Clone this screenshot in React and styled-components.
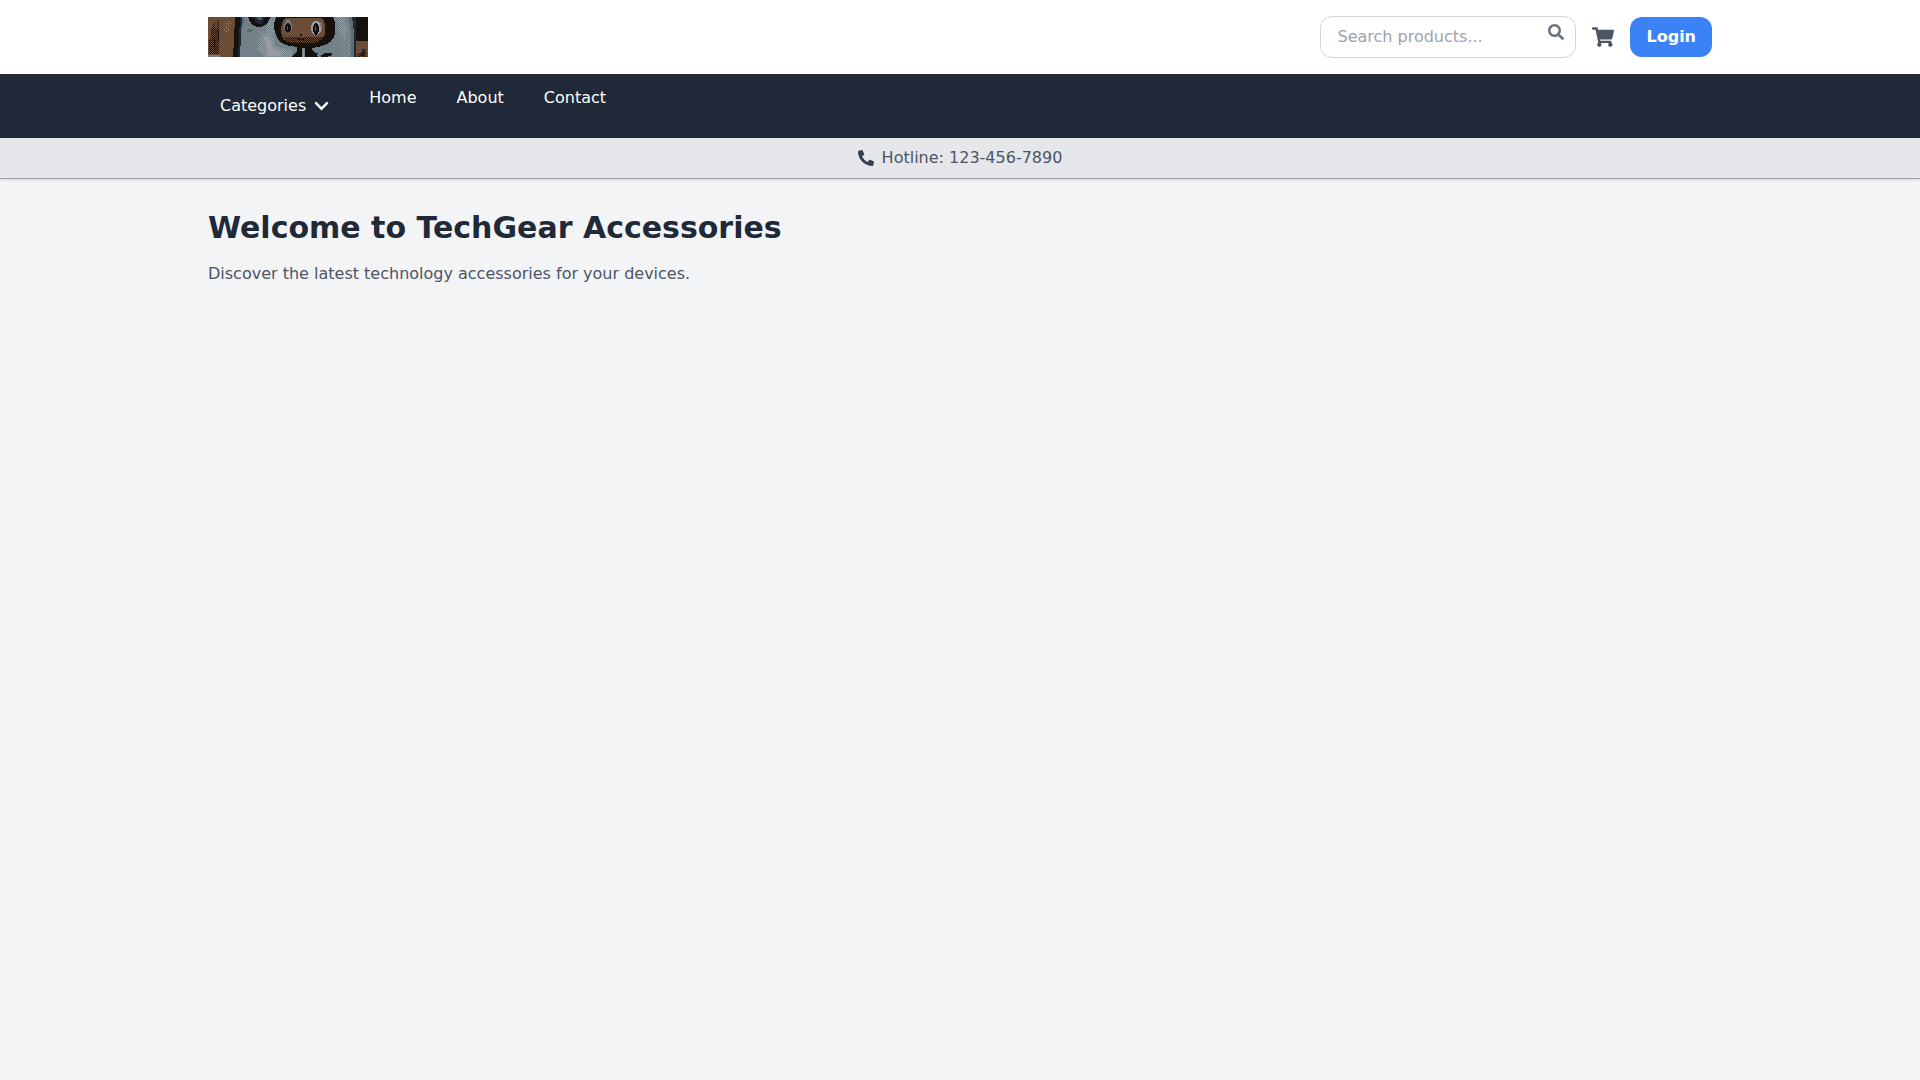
import React, { useState } from 'react';
import styled, { createGlobalStyle } from 'styled-components';
import { FaSearch, FaShoppingCart, FaChevronDown, FaPhoneAlt } from 'react-icons/fa';

const GlobalStyle = createGlobalStyle`
    *, *::before, *::after {
        box-sizing: border-box;
    }

    body {
        margin: 0;
        background-color: #f3f4f6;
        color: #1f2937;
        font-family: 'DejaVu Sans', sans-serif;
        font-size: 16px;
        line-height: 24px;
    }

    button, input {
        font: inherit;
    }
`;

const Container = styled.div`
    width: 100%;
    max-width: 1536px;
    margin: 0 auto;
    padding: 0 16px;
`;

const Header = styled.header`
    background-color: #ffffff;
    box-shadow: 0 1px 0 #9ca3af, 0 2px 2px rgba(0, 0, 0, 0.12);
`;

const TopBar = styled(Container)`
    display: flex;
    align-items: center;
    justify-content: space-between;
    padding: 16px;
`;

const LogoLink = styled.a`
    display: block;
    width: 160px;
    height: 40px;

    svg {
        display: block;
        width: 100%;
        height: 100%;
    }
`;

const Actions = styled.div`
    display: flex;
    align-items: center;
    gap: 16px;
`;

const SearchForm = styled.form`
    position: relative;
    width: 256px;
`;

const SearchInput = styled.input`
    display: block;
    width: 100%;
    padding: 8px 40px 8px 16px;
    border: 1px solid #d1d5db;
    border-radius: 12px;
    background-color: #ffffff;
    color: #1f2937;

    &::placeholder {
        color: #9ca3af;
        opacity: 1;
    }
`;

const SearchButton = styled.button`
    position: absolute;
    top: 8px;
    right: 12px;
    display: flex;
    padding: 0;
    border: 0;
    background: none;
    color: #6b7280;
    cursor: pointer;
`;

const CartLink = styled.a`
    display: flex;
    color: #4b5563;

    svg {
        width: 22px;
        height: 20px;
    }
`;

const LoginButton = styled.button`
    padding: 8px 16px;
    border: 0;
    border-radius: 12px;
    background-color: #3b82f6;
    color: #ffffff;
    font-weight: bold;
    cursor: pointer;

    &:hover {
        background-color: #2563eb;
    }
`;

const Nav = styled.nav`
    background-color: #1f2937;
    color: #ffffff;
`;

const NavList = styled.ul`
    display: flex;
    gap: 16px;
    margin: 0;
    padding: 12px 0;
    list-style: none;
`;

const CategoriesButton = styled.button`
    display: flex;
    align-items: center;
    gap: 8px;
    padding: 8px 12px;
    border: 0;
    background: none;
    color: inherit;
    cursor: pointer;

    svg {
        width: 15px;
        height: 16px;
    }
`;

const NavLink = styled.a`
    padding: 8px 12px;
    color: inherit;
    text-decoration: none;

    &:hover {
        color: #d1d5db;
    }
`;

const Hotline = styled.div`
    display: flex;
    align-items: center;
    justify-content: center;
    gap: 8px;
    padding: 8px 16px;
    background-color: #e5e7eb;
    color: #374151;

    span {
        color: #4b5563;
    }
`;

const Main = styled(Container)`
    padding: 32px 16px;
`;

const Title = styled.h1`
    margin: 0 0 16px;
    font-size: 30px;
    line-height: 36px;
    font-weight: bold;
`;

const Intro = styled.p`
    margin: 0;
    color: #4b5563;
`;

const navLinks = ['Home', 'About', 'Contact'];

const Logo = () => (
    <svg viewBox="0 0 160 40" role="img" aria-label="TechGear" shapeRendering="crispEdges">
        <defs>
            <pattern id="darkDots" width="2" height="2" patternUnits="userSpaceOnUse">
                <rect width="1" height="1" fill="#14110f" />
                <rect x="1" y="1" width="1" height="1" fill="#14110f" />
            </pattern>
            <pattern id="denseDots" width="2" height="2" patternUnits="userSpaceOnUse">
                <rect width="1" height="1" fill="#999ba2" />
                <rect x="1" y="1" width="1" height="1" fill="#999ba2" />
            </pattern>
            <pattern id="lightDots" width="4" height="4" patternUnits="userSpaceOnUse">
                <rect width="1" height="1" fill="#999ba2" />
                <rect x="2" y="2" width="1" height="1" fill="#999ba2" />
            </pattern>
            <pattern id="slateDots" width="2" height="2" patternUnits="userSpaceOnUse">
                <rect width="1" height="1" fill="#4b5563" />
                <rect x="1" y="1" width="1" height="1" fill="#4b5563" />
            </pattern>
        </defs>

        {/* wall and door frame */}
        <rect width="160" height="40" fill="#728087" />
        <rect width="28" height="40" fill="#6b4c36" />
        <path d="M3 11h2V6h2v5h2V3h2v34H1V22h2z" fill="url(#darkDots)" />
        <path d="M10 12h1v12h-1zM6 20h1v10H6z" fill="#14110f" />
        <path d="M0 38h12v2H0z" fill="#728087" />
        <path d="M17 4h7v6h-3v5h-5z" fill="url(#lightDots)" />
        <path d="M27 0h5l-1 22-1 18h-5l1-18z" fill="#14110f" />
        <path d="M32 0h2l-1 18-1 22h-2l1-20z" fill="#1f2937" />
        <path d="M34 0h3l-2 10-2 8z" fill="url(#slateDots)" />

        {/* bright spots on the wall */}
        <path d="M50 13h17v20H45z" fill="url(#lightDots)" />
        <path d="M53 16h11l4 14 16 3v7H58l-8-7z" fill="url(#denseDots)" />
        <path d="M56 20h6l3 12 8 2v5H60z" fill="#999ba2" />
        <path d="M59 2h8l-1 14h-8z" fill="url(#denseDots)" />
        <path d="M40 12h5l-2 3h-4z" fill="url(#slateDots)" />
        <path d="M40 0h22c-1 6-5 10-11 10-5 0-9-3-11-10z" fill="#14110f" />
        <path d="M46 0h11c-1 5-3 7-5 7-3 0-5-2-6-7z" fill="#1f2937" />
        <path d="M49 0h5v3h-4z" fill="#4b5563" />
        <path d="M125 0h14l3 12v28h-8l-3-14z" fill="url(#lightDots)" />
        <path d="M130 0h6l3 12-2 12-6-12z" fill="url(#denseDots)" />
        <path d="M141 0h3l2 18v22h-3V18z" fill="url(#slateDots)" />
        <path d="M144 0h4v40h-2V16z" fill="#1f2937" />
        <path d="M148 0h12v24h-12z" fill="#14110f" />
        <path d="M148 24h12v16h-12z" fill="#6b4c36" />
        <path d="M154 32h3v2h1v3h-2v2h-3v-4h1z" fill="#1f2937" />
        <path d="M149 36h9v4h-9z" fill="url(#darkDots)" />

        {/* head, body and arms */}
        <path d="M68 0h57c2 4 3 10 2 16-1 8-7 12-17 14l-6 1c0 3 4 6 9 6l6-1h5v2l-6 2H84l5-6v-4c-12-1-19-4-21-12-3-7-2-13 0-18z" fill="#14110f" />
        <path d="M94 31h3v9h-3z" fill="#728087" />
        <path d="M95 32h1v8h-1z" fill="#999ba2" />
        <path d="M109 37h6v1h-2v2h-3z" fill="#728087" />
        <path d="M77 1h37c3 3 4 8 3 15-1 6-5 9-11 10H84c-7-1-11-5-11-12 0-5 1-10 4-13z" fill="#6b4c36" />
        <path d="M75 20h41l-3 4-7 2H84l-6-2z" fill="url(#darkDots)" />

        {/* eyes, nose and mouth */}
        <ellipse cx="80" cy="10" rx="4" ry="7" fill="#728087" />
        <ellipse cx="80" cy="11" rx="3" ry="5" fill="#14110f" />
        <rect x="79" y="9" width="1" height="4" fill="#4b5563" />
        <ellipse cx="108" cy="11" rx="5" ry="7" fill="#999ba2" />
        <path d="M111 5h3v9l-3 4z" fill="url(#denseDots)" />
        <ellipse cx="108" cy="12" rx="3" ry="6" fill="#14110f" />
        <rect x="107" y="9" width="1" height="5" fill="#4b5563" />
        <rect x="92" y="17" width="2" height="2" fill="#14110f" />
        <path d="M90 21h1v1h4v-1h1v2h-6z" fill="#14110f" />
    </svg>
);

const App = () => {
    const [query, setQuery] = useState('');

    return (
        <>
            <GlobalStyle />
            <Header>
                <TopBar>
                    <LogoLink href="#">
                        <Logo />
                    </LogoLink>
                    <Actions>
                        <SearchForm role="search" onSubmit={(e) => e.preventDefault()}>
                            <SearchInput
                                type="text"
                                aria-label="Search products"
                                placeholder="Search products..."
                                value={query}
                                onChange={(e) => setQuery(e.target.value)}
                            />
                            <SearchButton type="submit" aria-label="Search">
                                <FaSearch />
                            </SearchButton>
                        </SearchForm>
                        <CartLink href="#cart" aria-label="Cart">
                            <FaShoppingCart />
                        </CartLink>
                        <LoginButton type="button">Login</LoginButton>
                    </Actions>
                </TopBar>
                <Nav>
                    <Container>
                        <NavList>
                            <li>
                                <CategoriesButton type="button" aria-haspopup="true">
                                    Categories
                                    <FaChevronDown />
                                </CategoriesButton>
                            </li>
                            {navLinks.map((label) => (
                                <li key={label}>
                                    <NavLink href={`#${label.toLowerCase()}`}>{label}</NavLink>
                                </li>
                            ))}
                        </NavList>
                    </Container>
                </Nav>
                <Hotline>
                    <FaPhoneAlt />
                    <span>Hotline: 123-456-7890</span>
                </Hotline>
            </Header>
            <Main as="main">
                <Title>Welcome to TechGear Accessories</Title>
                <Intro>Discover the latest technology accessories for your devices.</Intro>
            </Main>
        </>
    );
};

export default App;
